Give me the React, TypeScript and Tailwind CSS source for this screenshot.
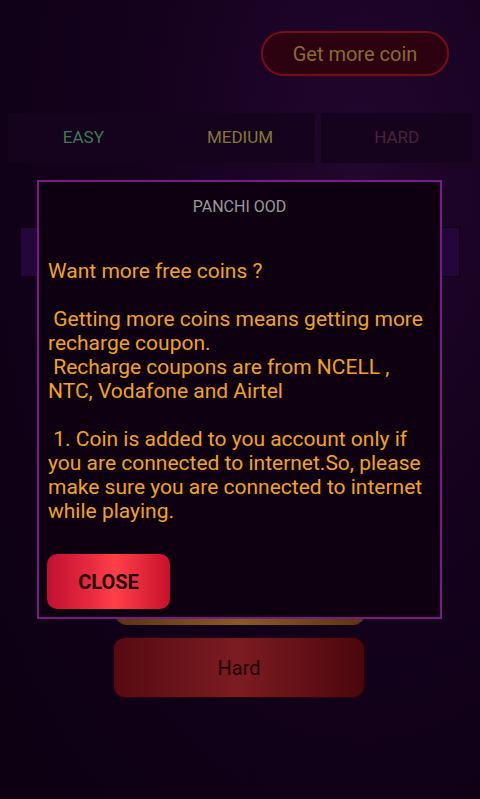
import React from "react";

const font = { fontFamily: "Roboto, 'Liberation Sans', sans-serif" };

const Tab = ({ label, color }: { label: string; color: string }) => (
    <div className={`flex-1 h-[50px] flex items-center justify-center bg-[#15021d] text-[17px] ${color}`}>
        {label}
    </div>
);

const App = () => (
    <div className="relative w-[480px] h-[799px] overflow-hidden bg-[radial-gradient(ellipse_at_75%_20%,#22062e_0%,#14011c_45%,#0c0012_100%)]" style={font}>
        {/* game screen behind the dialog */}
        <div className="flex justify-end pt-[31px] pr-[31px]">
            <div className="w-[188px] h-[45px] rounded-full border-2 border-[#7a0a14] bg-[#2c0210] flex items-center justify-center text-[20px] text-[#8a6a34]">
                Get more coin
            </div>
        </div>
        <div className="flex gap-[6px] mt-[37px] px-[8px]">
            <Tab label="EASY" color="text-[#3d7a52]" />
            <Tab label="MEDIUM" color="text-[#86783a]" />
            <Tab label="HARD" color="text-[#4c2438]" />
        </div>
        <div className="mx-[20px] mt-[64px] h-[50px] bg-[#24073a] border border-[#12001a]" />
        <div className="flex flex-col items-center gap-[12px] mt-[287px]">
            <div className="w-[250px] h-[61px] rounded-[12px] bg-[linear-gradient(90deg,#5a3410,#8a5a24_50%,#5a3410)]" />
            <div className="w-[252px] h-[61px] ml-[-2px] rounded-[12px] border border-[#2a0008] bg-[linear-gradient(90deg,#560a12,#7c1c22_50%,#4a060c)] flex items-center justify-center text-[20px] text-[#1a0204]">
                Hard
            </div>
        </div>

        {/* dialog */}
        <div className="absolute left-[37px] top-[180px] w-[405px] h-[439px] border-2 border-[#7a1a86] bg-[#0e0010] flex flex-col">
            <div className="h-[50px] flex items-center justify-center text-[16px] text-[#9c989e]">PANCHI OOD</div>
            <div className="px-[9px] mt-[27px] text-[21px] leading-[24px] text-[#f0a420] whitespace-pre-wrap">
                {"Want more free coins ?\n\n Getting more coins means getting more recharge coupon.\n Recharge coupons are from NCELL , NTC, Vodafone and Airtel\n\n 1. Coin is added to you account only if you are connected to internet.So, please make sure you are connected to internet while playing."}
            </div>
            <div className="px-[8px] mt-auto mb-[8px]">
                <div className="w-[123px] h-[55px] rounded-[10px] bg-[linear-gradient(90deg,#c01030,#e82a40_35%,#ff4048_55%,#c8102c)] flex items-center justify-center text-[20px] font-bold text-[#200407]">
                    CLOSE
                </div>
            </div>
        </div>
    </div>
);

export default App;
